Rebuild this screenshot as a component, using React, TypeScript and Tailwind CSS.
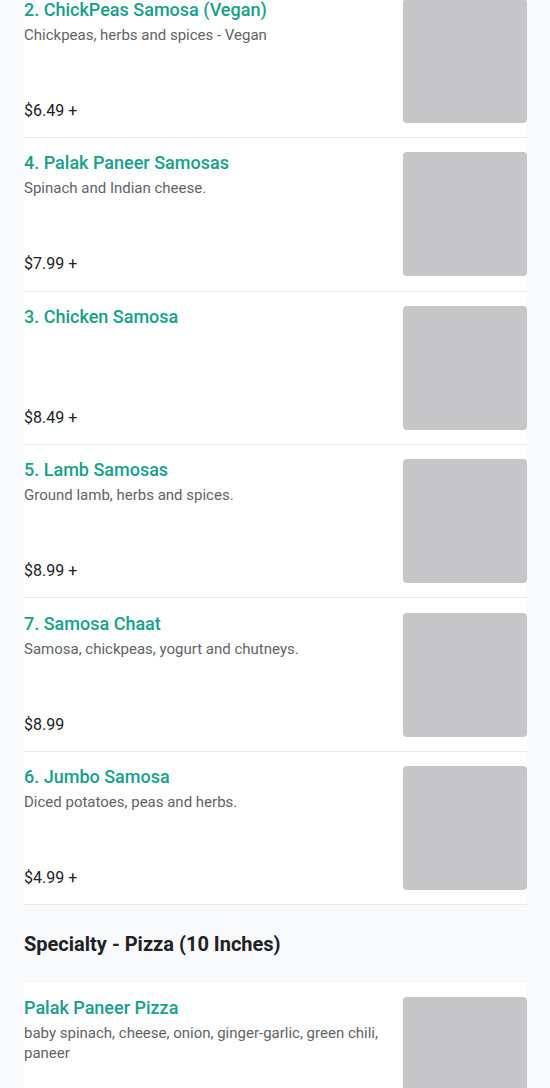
const items = [
  { name: "2. ChickPeas Samosa (Vegan)", desc: "Chickpeas, herbs and spices - Vegan", price: "$6.49 +" },
  { name: "4. Palak Paneer Samosas", desc: "Spinach and Indian cheese.", price: "$7.99 +" },
  { name: "3. Chicken Samosa", desc: "", price: "$8.49 +" },
  { name: "5. Lamb Samosas", desc: "Ground lamb, herbs and spices.", price: "$8.99 +" },
  { name: "7. Samosa Chaat", desc: "Samosa, chickpeas, yogurt and chutneys.", price: "$8.99" },
  { name: "6. Jumbo Samosa", desc: "Diced potatoes, peas and herbs.", price: "$4.99 +" },
]

function MenuItem({ name, desc, price }: { name: string; desc: string; price?: string }) {
  return (
    <div className="flex gap-4 bg-white py-[14.2px] border-b border-[#e8e9eb]">
      <div className="flex-1 flex flex-col justify-between min-w-0">
        <div>
          <h3 className="text-[18px] leading-[22px] font-medium text-[#16a08b]">{name}</h3>
          {desc && <p className="mt-1 text-[15px] leading-[20px] text-[#5f6368]">{desc}</p>}
        </div>
        {price && <p className="text-[16px] leading-[24px] font-normal text-[#202124]">{price}</p>}
      </div>
      <div className="w-[124px] h-[124px] shrink-0 rounded-[4px] bg-[#c6c6c8]" />
    </div>
  )
}

export default function App() {
  return (
    <div className="min-h-screen bg-[#f8f9fa] pl-6 pr-[23px] overflow-hidden" style={{ fontFamily: "Roboto, 'Noto Sans', sans-serif" }}>
      <div className="-mt-[15.2px]">
        {items.map((item) => (
          <MenuItem key={item.name} {...item} />
        ))}
      </div>
      <div className="py-[25px]">
        <h2 className="text-[20px] leading-[28px] font-bold text-[#202124]">Specialty - Pizza (10 Inches)</h2>
      </div>
      <MenuItem
        name="Palak Paneer Pizza"
        desc="baby spinach, cheese, onion, ginger-garlic, green chili, paneer"
      />
    </div>
  )
}
